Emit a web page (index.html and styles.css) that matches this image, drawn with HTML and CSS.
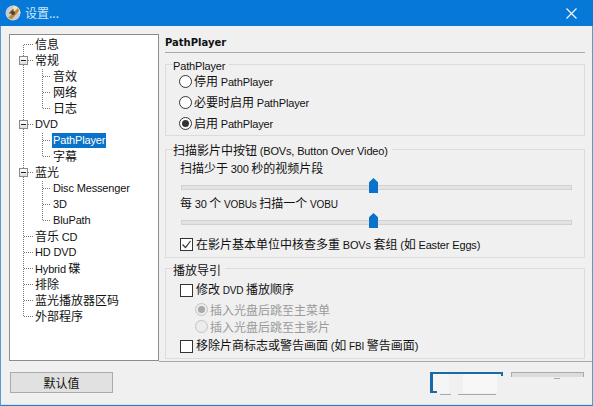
FILE: index.html
```html
<!DOCTYPE html>
<html lang="zh-CN">
<head>
<meta charset="utf-8">
<title>设置...</title>
<link rel="stylesheet" href="styles.css">
</head>
<body>
<div class="window">
  <header class="titlebar">
    <svg class="app-icon" width="16" height="16" viewBox="0 0 16 16"><circle cx="8" cy="8" r="7.5" fill="#c9cdd2"/><path d="M8 .5A7.500 7.500 0 0 1 15.500 8H8z" fill="#e9e2c0"/><path d="M3 13 13 3l1 3-7 8z" fill="#c08a2c"/><path d="M4 8l4-4 1 1-4 4z" fill="#6a4a20"/><circle cx="8" cy="8" r="2" fill="#4d4030"/></svg>
    <span class="title">设置...</span>
    <svg class="close" width="11" height="11" viewBox="0 0 11 11"><path d="M.5.5l10 10M10.500.5l-10 10" stroke="#fff" stroke-width="1.100" fill="none"/></svg>
  </header>
  <div class="content">
    <div class="main">
      <nav class="tree">
        <svg class="tree-lines" width="60" height="300" viewBox="0 0 60 300">
          <path d="M13.500 9.500V281.500M13.500 9.500H24M18 25.500H24M32.500 33.500V73.500M32.500 41.500H41M32.500 57.500H41M32.500 73.500H41M18 89.500H24M32.500 97.500V121.500M32.500 105.500H41M32.500 121.500H41M18 137.500H24M32.500 145.500V185.500M32.500 153.500H41M32.500 169.500H41M32.500 185.500H41M13.500 201.500H24M13.500 217.500H24M13.500 233.500H24M13.500 249.500H24M13.500 265.500H24M13.500 281.500H24" stroke="#777" stroke-dasharray="1 1" fill="none" shape-rendering="crispEdges"/>
        </svg>
        <ul class="tree-list">
          <li class="row l1">信息</li>
          <li class="row l1"><i class="expander"></i>常规</li>
          <li class="row l2">音效</li>
          <li class="row l2">网络</li>
          <li class="row l2">日志</li>
          <li class="row l1"><i class="expander"></i><span class="lat">DVD</span></li>
          <li class="row l2"><span class="selected lat">PathPlayer</span></li>
          <li class="row l2">字幕</li>
          <li class="row l1"><i class="expander"></i>蓝光</li>
          <li class="row l2 lat">Disc Messenger</li>
          <li class="row l2 lat">3D</li>
          <li class="row l2 lat">BluPath</li>
          <li class="row l1"><span>音乐 <span class="lat">CD</span></span></li>
          <li class="row l1 lat">HD DVD</li>
          <li class="row l1"><span><span class="lat">Hybrid</span> 碟</span></li>
          <li class="row l1">排除</li>
          <li class="row l1">蓝光播放器区码</li>
          <li class="row l1">外部程序</li>
        </ul>
      </nav>
      <section class="panel">
        <h1 class="panel-title">PathPlayer</h1>
        <fieldset class="group g1">
          <legend class="lat">PathPlayer</legend>
          <div class="opt"><i class="radio"></i><span>停用 <span class="lat">PathPlayer</span></span></div>
          <div class="opt"><i class="radio"></i><span>必要时启用 <span class="lat">PathPlayer</span></span></div>
          <div class="opt"><i class="radio on"></i><span>启用 <span class="lat">PathPlayer</span></span></div>
        </fieldset>
        <fieldset class="group g2">
          <legend>扫描影片中按钮 <span class="lat">(BOVs, Button Over Video)</span></legend>
          <div class="label">扫描少于 <span class="lat">300</span> 秒的视频片段</div>
          <div class="slider"><i class="thumb"></i></div>
          <div class="label">每 <span class="lat">30</span> 个 <span class="lat small">VOBUs</span> 扫描一个 <span class="lat small">VOBU</span></div>
          <div class="slider"><i class="thumb"></i></div>
          <div class="opt check-row"><i class="check on"><svg width="11" height="11" viewBox="0 0 11 11"><path d="M1.500 5.500l3 3 5-6.500" stroke="#333" stroke-width="1.200" fill="none"/></svg></i><span>在影片基本单位中核查多重 <span class="lat">BOVs</span> 套组 <span class="lat">(</span>如 <span class="lat">Easter Eggs)</span></span></div>
        </fieldset>
        <fieldset class="group g3">
          <legend>播放导引</legend>
          <div class="opt"><i class="check"></i><span>修改 <span class="lat small">DVD</span> 播放顺序</span></div>
          <div class="opt sub disabled"><i class="radio on"></i>插入光盘后跳至主菜单</div>
          <div class="opt sub disabled"><i class="radio"></i>插入光盘后跳至主影片</div>
          <div class="opt"><i class="check"></i><span>移除片商标志或警告画面 <span class="lat">(</span>如 <span class="lat small">FBI</span> 警告画面<span class="lat">)</span></span></div>
        </fieldset>
      </section>
    </div>
    <footer class="footer">
      <button class="btn default-btn">默认值</button>
      <div class="erased">
        <div class="btn-stub ok"></div>
        <div class="btn-stub cancel"></div>
      </div>
    </footer>
  </div>
</div>
</body>
</html>
```
FILE: styles.css
```css
* { box-sizing: border-box; }
html, body { margin: 0; height: 100%; }
body { font: 12px/16px "Noto Sans CJK SC", "Noto Sans", sans-serif; color: #111; }
ul { list-style: none; margin: 0; padding: 0; }
i { display: block; font-style: normal; }
.lat { font-family: "Liberation Sans", sans-serif; font-size: 11px; letter-spacing: -0.15px; }
.lat.small { font-size: 10px; }

.window { width: 593px; height: 406px; display: flex; flex-direction: column; background: #f0f0f0; border: 1px solid #4f9fd0; border-top: 0; border-bottom: 1px solid #2a7fb5; box-shadow: inset 0 -1px 0 #cfe6f2; }
.titlebar { height: 26px; margin: 0 -1px; background: #0678d8; display: flex; align-items: center; padding: 0 16px 0 5px; flex: none; }
.title { margin-left: 4px; flex: 1; font-size: 12px; color: #cfe8fb; }
.close { display: block; }

.content { flex: 1; display: flex; flex-direction: column; min-height: 0; }
.main { display: flex; height: 335px; padding: 8px 0 0 8px; flex: none; }
.tree { position: relative; width: 150px; height: 327px; background: #fff; border: 1px solid #8c8c8c; padding-top: 1px; flex: none; }
.tree-lines { position: absolute; left: 0; top: 0; }
.tree-list { position: relative; }
.row { height: 16px; display: flex; align-items: center; white-space: nowrap; }
.l1 { padding-left: 25px; }
.l2 { padding-left: 43px; }
.expander { position: absolute; left: 9px; width: 9px; height: 9px; background: linear-gradient(#fff, #ddd); border: 1px solid #8a8a8a; }
.expander::after { content: ""; display: block; margin: 3px 1px 0; height: 1px; background: #222; }
.selected { background: #0a72c8; color: #fff; padding: 0 1px; margin-left: -1px; line-height: 15px; }

.panel { flex: 1; padding: 0 7px 0 6px; min-width: 0; }
.panel-title { margin: 0 0 3px; height: 19px; font: 700 10px/18px "DejaVu Sans", sans-serif; border-bottom: 1px solid #a8a8a8; }
.group { margin: 0; padding: 0 0 0 13px; border: 1px solid #dcdcdc; min-width: 0; }
.group legend { margin-left: -6px; padding: 3px 4px 0 0; line-height: 14px; }
.g1 { height: 80px; margin-bottom: 4px; }
.g2 { height: 118px; margin-bottom: 2px; }
.g3 { height: 99px; }
.opt { display: flex; align-items: center; height: 21px; gap: 3px; white-space: nowrap; }
.g1 .opt:first-of-type { margin-top: -2px; }
.g1 .opt { gap: 2px; }
.g3 .opt { height: 22px; }
.g3 .opt:first-of-type { margin-top: 2px; }
.g3 .opt.sub { height: 17px; margin-left: 16px; color: #9a9a9a; gap: 2px; }
.radio { width: 13px; height: 13px; border-radius: 50%; border: 1px solid #333; background: #fff; flex: none; position: relative; }
.radio.on::after { content: ""; position: absolute; left: 2px; top: 2px; width: 7px; height: 7px; border-radius: 50%; background: #333; }
.disabled .radio { border-color: #c4c4c4; background: #ececec; }
.disabled .radio.on::after { background: #a8a8a8; }
.check { width: 13px; height: 13px; margin-left: 1px; border: 1px solid #333; background: #fff; flex: none; overflow: hidden; }
.check svg { display: block; }
.label { height: 16px; line-height: 16px; margin-left: 1px; }
.g2 .label:first-of-type { margin-top: 2px; }
.label + .slider { margin-top: 1px; }
.slider { height: 18px; margin: 0 12px 0 2px; position: relative; }
.slider::before { content: ""; position: absolute; left: 0; right: 0; top: 8px; height: 3px; background: #e3e3e3; border: 1px solid #d2d2d2; }
.thumb { position: absolute; left: 188px; top: 1px; width: 9px; height: 15px; background: #0a72c8; clip-path: polygon(50% 0, 100% 28%, 100% 100%, 0 100%, 0 28%); }
.check-row { margin-top: 4px; }

.footer { flex: 1; display: flex; justify-content: space-between; padding: 11px 0 0 9px; position: relative; }
.footer::before { content: ""; position: absolute; left: 158px; right: 0; top: 0; height: 1px; background: #a8a8a8; }
.btn { width: 103px; height: 21px; padding: 0; background: #e1e1e1; border: 1px solid #aaa; font: inherit; color: #111; }
.erased { display: flex; gap: 8px; margin-right: 8px; }
.btn-stub { width: 73px; position: relative; }
.ok { height: 21px; border: solid #1a6aa8; border-width: 2px 0 0 3px; background: linear-gradient(#1a6aa8, #1a6aa8) right top / 2px 2px no-repeat, linear-gradient(90deg, #f5f5f5 16px, #f0f0f0 16px, #f0f0f0 30px, #f7f7f7 30px, #f7f7f7 64px, #f0f0f0 64px); }
.ok::after { content: ""; position: absolute; left: -3px; bottom: 0; width: 7px; height: 2px; background: #1a6aa8; }
.ok::before { content: ""; position: absolute; left: 7px; right: 7px; top: 20px; height: 1px; background: linear-gradient(90deg, #aaa 11px, transparent 11px, transparent 18px, #aaa 18px); }
.cancel { height: 5px; background: #dcdcdc; border: 1px solid #aaa; border-bottom: 0; }
.cancel::after { content: ""; position: absolute; left: 42px; top: 5px; width: 6px; height: 1px; background: #aaa; }
```
